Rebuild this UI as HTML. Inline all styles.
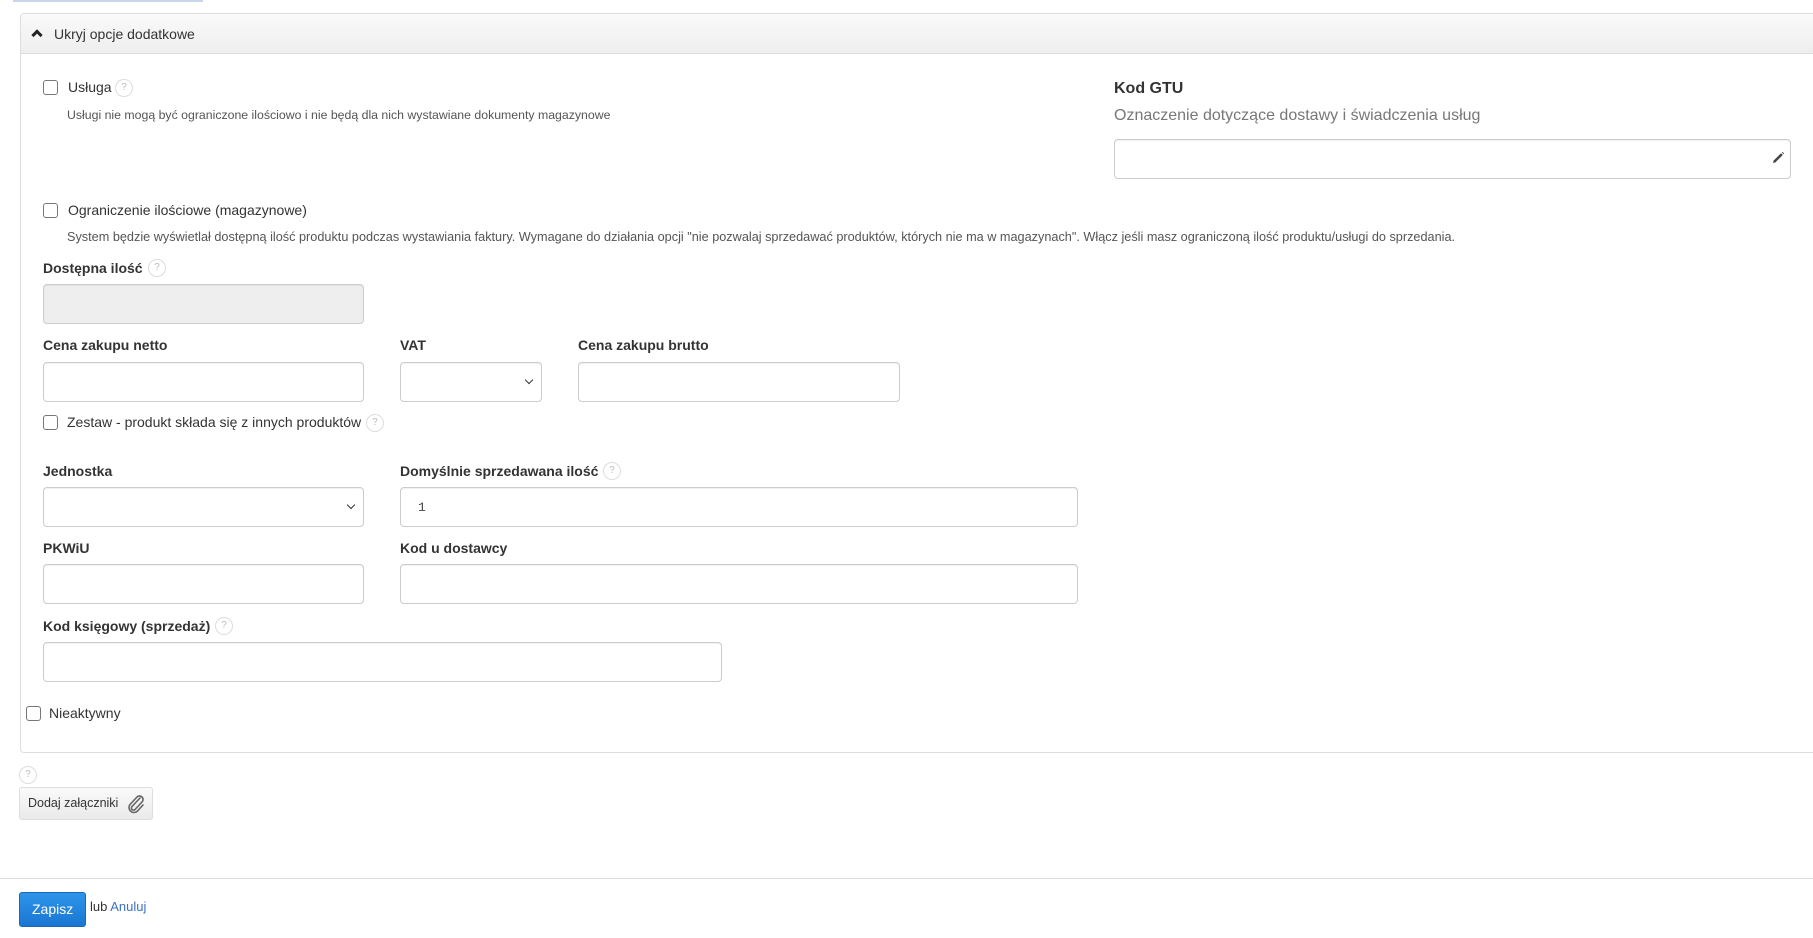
<!DOCTYPE html>
<html><head><meta charset="utf-8"><style>
*{box-sizing:border-box;margin:0;padding:0}
body{width:1813px;height:938px;background:#fff;font-family:"Liberation Sans",Arial,sans-serif;color:#333;position:relative;overflow:hidden}
.a{position:absolute}
.topline{left:13px;top:0;width:190px;height:2px;background:#c9d6ea}
.panel{left:20px;top:13px;width:1830px;height:740px;border:1px solid #ddd;border-radius:4px}
.hdr{left:21px;top:14px;width:1830px;height:40px;background:linear-gradient(#fafafa,#eeeeee);border-bottom:1px solid #ddd;border-radius:4px 4px 0 0}
.cb{width:15px;height:15px;border:1px solid #777;border-radius:3px;background:#fff}
.t14{font-size:14px;color:#333}
.t12{font-size:12px;color:#555}
.lbl{font-size:14px;font-weight:bold;color:#333}
.help{width:18px;height:18px;border:1px solid #ddd;border-radius:50%;font-size:10px;color:#bbb;text-align:center;line-height:16px}
.inp{border:1px solid #ccc;border-radius:4px;background:#fff;box-shadow:inset 0 1px 1px rgba(0,0,0,.06)}
.arrow{position:absolute;right:9px;top:14px;width:6px;height:6px;border-right:1.8px solid #333;border-bottom:1.8px solid #333;transform:rotate(45deg)}
</style></head><body>
<div class="a topline"></div>
<div class="a panel"></div>
<div class="a hdr"></div>
<div class="a" style="left:33px;top:31px;width:8px;height:8px;border-left:3px solid #222;border-top:3px solid #222;transform:rotate(45deg)"></div>
<div class="a t14" style="left:54px;top:26px;font-size:14px">Ukryj opcje dodatkowe</div>

<div class="a cb" style="left:43px;top:80px"></div>
<div class="a t14" style="left:68px;top:79px">Usługa</div>
<div class="a help" style="left:115px;top:79px">?</div>
<div class="a t12" style="left:67px;top:108px;font-size:12.3px">Usługi nie mogą być ograniczone ilościowo i nie będą dla nich wystawiane dokumenty magazynowe</div>

<div class="a" style="left:1114px;top:80px;font-size:16px;font-weight:bold;color:#333">Kod GTU</div>
<div class="a" style="left:1114px;top:107px;font-size:16px;color:#777">Oznaczenie dotyczące dostawy i świadczenia usług</div>
<div class="a inp" style="left:1114px;top:139px;width:677px;height:40px"></div>
<svg class="a" style="left:1770px;top:150px" width="16" height="16" viewBox="0 0 16 16"><path d="M3 13 L3.6 10.6 L11 3.2 L12.8 5 L5.4 12.4 Z" fill="#444"/><path d="M11.8 2.4 L13.6 4.2 L14.2 3.6 L12.4 1.8Z" fill="#444"/></svg>

<div class="a cb" style="left:43px;top:203px"></div>
<div class="a t14" style="left:68px;top:202px">Ograniczenie ilościowe (magazynowe)</div>
<div class="a t12" style="left:67px;top:230px;font-size:12.7px">System będzie wyświetlał dostępną ilość produktu podczas wystawiania faktury. Wymagane do działania opcji "nie pozwalaj sprzedawać produktów, których nie ma w magazynach". Włącz jeśli masz ograniczoną ilość produktu/usługi do sprzedania.</div>

<div class="a lbl" style="left:43px;top:260px">Dostępna ilość</div>
<div class="a help" style="left:148px;top:259px">?</div>
<div class="a inp" style="left:43px;top:284px;width:321px;height:40px;background:#eee"></div>

<div class="a lbl" style="left:43px;top:337px">Cena zakupu netto</div>
<div class="a lbl" style="left:400px;top:337px">VAT</div>
<div class="a lbl" style="left:578px;top:337px">Cena zakupu brutto</div>
<div class="a inp" style="left:43px;top:362px;width:321px;height:40px"></div>
<div class="a inp" style="left:400px;top:362px;width:142px;height:40px"><div class="arrow"></div></div>
<div class="a inp" style="left:578px;top:362px;width:322px;height:40px"></div>

<div class="a cb" style="left:43px;top:415px"></div>
<div class="a t14" style="left:67px;top:414px">Zestaw - produkt składa się z innych produktów</div>
<div class="a help" style="left:366px;top:414px">?</div>

<div class="a lbl" style="left:43px;top:463px">Jednostka</div>
<div class="a lbl" style="left:400px;top:463px">Domyślnie sprzedawana ilość</div>
<div class="a help" style="left:603px;top:462px">?</div>
<div class="a inp" style="left:43px;top:487px;width:321px;height:40px"><div class="arrow"></div></div>
<div class="a inp" style="left:400px;top:487px;width:678px;height:40px"><span style="position:absolute;left:17px;top:12px;font-size:13px;font-family:'Liberation Mono',monospace;color:#444">1</span></div>

<div class="a lbl" style="left:43px;top:540px">PKWiU</div>
<div class="a lbl" style="left:400px;top:540px">Kod u dostawcy</div>
<div class="a inp" style="left:43px;top:564px;width:321px;height:40px"></div>
<div class="a inp" style="left:400px;top:564px;width:678px;height:40px"></div>

<div class="a lbl" style="left:43px;top:618px">Kod księgowy (sprzedaż)</div>
<div class="a help" style="left:215px;top:617px">?</div>
<div class="a inp" style="left:43px;top:642px;width:679px;height:40px"></div>

<div class="a cb" style="left:26px;top:706px"></div>
<div class="a t14" style="left:49px;top:705px">Nieaktywny</div>

<div class="a help" style="left:19px;top:766px">?</div>
<div class="a" style="left:19px;top:787px;width:134px;height:33px;border:1px solid #ddd;border-radius:3px;background:linear-gradient(#fafafa,#eaeaea)"></div>
<div class="a" style="left:28px;top:796px;font-size:12.5px;color:#333">Dodaj załączniki</div>
<svg class="a" style="left:126px;top:793px" width="20" height="22" viewBox="0 0 20 22"><path d="M14 5 L6 13.5 a2 2 0 0 0 3 3 L16 9 a3.5 3.5 0 0 0 -5 -5 L4 11.5 a5 5 0 0 0 7 7 L17 12" fill="none" stroke="#666" stroke-width="1.6" stroke-linecap="round"/></svg>

<div class="a" style="left:0;top:878px;width:1813px;height:1px;background:#ddd"></div>
<div class="a" style="left:19px;top:892px;width:67px;height:35px;border-radius:3px;background:linear-gradient(#2d95ea,#1a76d2);border:1px solid #1868b8"></div>
<div class="a" style="left:32px;top:901px;font-size:14px;color:#fff">Zapisz</div>
<div class="a" style="left:90px;top:899px;font-size:13px;color:#333">lub <span style="color:#3b73c4">Anuluj</span></div>
</body></html>
